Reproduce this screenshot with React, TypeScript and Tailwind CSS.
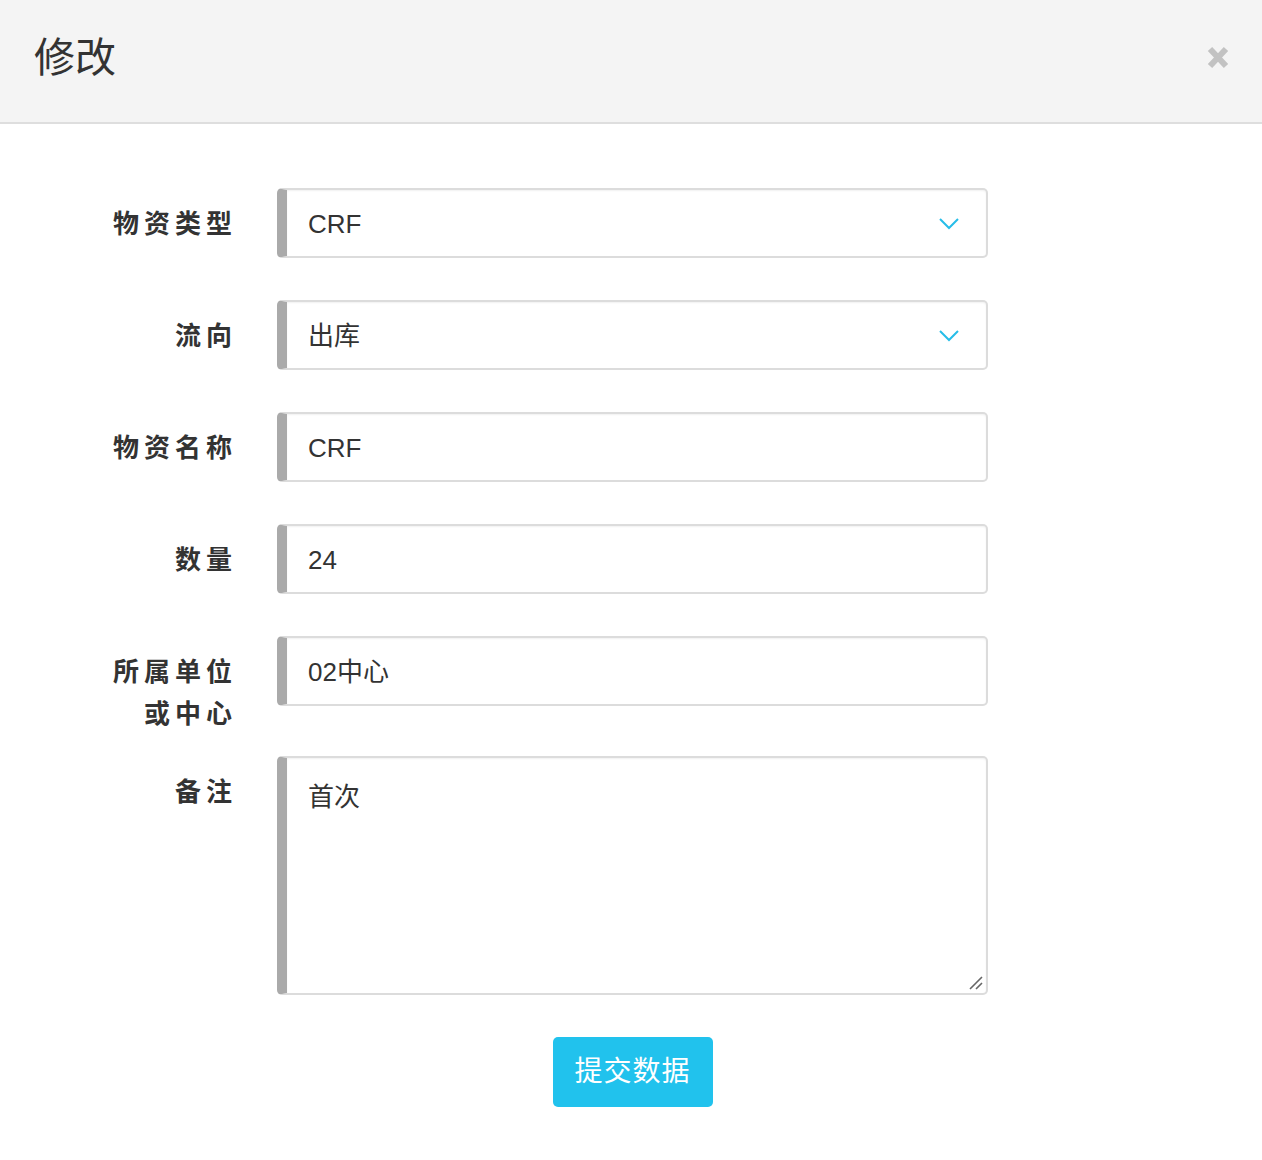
import React from 'react';

const FONT = { fontFamily: '"Liberation Sans", "Noto Sans CJK SC", sans-serif' };

function Chevron() {
  return (
    <svg width="22" height="14" viewBox="0 0 22 14" fill="none">
      <path d="M2 2 L11 11 L20 2" stroke="#27bde8" strokeWidth="2" />
    </svg>
  );
}

function Label({ lines }: { lines: string[] }) {
  return (
    <div className="w-[237px] shrink-0 text-right pt-[15px] text-[26px] leading-[42px] font-bold text-[#333] tracking-[5px]">
      {lines.map((l) => (
        <div key={l}>{l}</div>
      ))}
    </div>
  );
}

function Field({ value, select }: { value: string; select?: boolean }) {
  return (
    <div className="ml-[40px] w-[711px] h-[70px] flex items-center rounded-[5px] border-2 border-[#dcdcdc] border-l-[10px] border-l-[#aaaaaa] bg-white pl-[21px] pr-[26px] pt-[2px] shadow-[inset_0_1px_2px_rgba(0,0,0,0.06)]">
      <span className="flex-1 text-[26px] text-[#333]">{value}</span>
      {select && <Chevron />}
    </div>
  );
}

export default function App() {
  const rows: { label: string[]; value: string; select?: boolean; mb: string }[] = [
    { label: ['物资类型'], value: 'CRF', select: true, mb: 'mb-[42px]' },
    { label: ['流向'], value: '出库', select: true, mb: 'mb-[42px]' },
    { label: ['物资名称'], value: 'CRF', mb: 'mb-[42px]' },
    { label: ['数量'], value: '24', mb: 'mb-[42px]' },
    { label: ['所属单位', '或中心'], value: '02中心', mb: 'mb-[21px]' },
  ];

  return (
    <div className="w-[1262px] min-h-[1160px] bg-white" style={FONT}>
      {/* Header */}
      <div className="h-[124px] bg-[#f4f4f4] border-b-2 border-[#dedede] flex items-center justify-between pl-[34px] pr-[33px]">
        <h1 className="text-[41px] font-normal text-[#333] leading-none -mt-[6px]">修改</h1>
        <svg width="22" height="23" viewBox="0 0 22 23" className="-mt-[8px]">
          <path d="M3 3 L19 20 M19 3 L3 20" stroke="#c2c2c2" strokeWidth="6" />
        </svg>
      </div>

      {/* Form */}
      <div className="pt-[64px]">
        {rows.map((r) => (
          <div key={r.label.join('')} className={`flex items-start ${r.mb}`}>
            <Label lines={r.label} />
            <Field value={r.value} select={r.select} />
          </div>
        ))}

        {/* Remarks */}
        <div className="flex items-start">
          <Label lines={['备注']} />
          <div className="relative ml-[40px] w-[711px] h-[239px] rounded-[5px] border-2 border-[#dcdcdc] border-l-[10px] border-l-[#aaaaaa] bg-white pl-[21px] pt-[20px] shadow-[inset_0_1px_2px_rgba(0,0,0,0.06)]">
            <span className="text-[26px] text-[#333]">首次</span>
            <svg width="14" height="14" viewBox="0 0 14 14" className="absolute right-[3px] bottom-[3px]">
              <path d="M1 13 L13 1 M7 13 L13 7" stroke="#666" strokeWidth="1.6" />
            </svg>
          </div>
        </div>

        {/* Submit */}
        <div className="flex pl-[277px] pt-[42px] pb-[54px]">
          <div className="w-[711px] flex justify-center">
            <button className="w-[160px] h-[70px] rounded-[5px] bg-[#21c2ed] text-white text-[28px] tracking-[1px]">
              提交数据
            </button>
          </div>
        </div>
      </div>
    </div>
  );
}
